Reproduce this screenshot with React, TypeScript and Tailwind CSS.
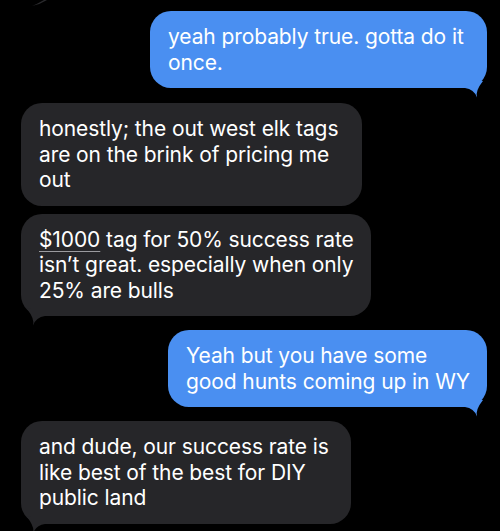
import React from 'react';

type Side = 'me' | 'them';

interface Msg {
  side: Side;
  lines: React.ReactNode[];
  width: string;
  tail: boolean;
  gap: string;
}

const messages: Msg[] = [
  { side: 'me', lines: ['yeah probably true. gotta do it', 'once.'], width: 'w-[337px]', tail: true, gap: 'mt-0' },
  {
    side: 'them',
    lines: ['honestly; the out west elk tags', 'are on the brink of pricing me', 'out'],
    width: 'w-[341px]',
    tail: false,
    gap: 'mt-[15px]',
  },
  {
    side: 'them',
    lines: [
      <>
        <span className="underline decoration-[#9b9b9f] decoration-1 underline-offset-[4px]">$1000</span> tag for 50% success rate
      </>,
      'isn\u2019t great. especially when only',
      '25% are bulls',
    ],
    width: 'w-[350px]',
    tail: true,
    gap: 'mt-[8px]',
  },
  { side: 'me', lines: ['Yeah but you have some', 'good hunts coming up in WY'], width: 'w-[319px]', tail: true, gap: 'mt-[14px]' },
  {
    side: 'them',
    lines: ['and dude, our success rate is', 'like best of the best for DIY', 'public land'],
    width: 'w-[330px]',
    tail: true,
    gap: 'mt-[14px]',
  },
];

function Tail({ side }: { side: Side }) {
  if (side === 'me') {
    return (
      <svg className="absolute right-[2px] bottom-[-10px] w-[24px] h-[18px]" viewBox="0 0 24 18">
        <path d="M0 0 L0 8 L4 8 Q13 9 16 17.5 Q14 11 22 1 L18 0 Z" fill="#4a8ff1" />
      </svg>
    );
  }
  return (
    <svg className="absolute left-[4px] bottom-[-10px] w-[24px] h-[18px]" viewBox="0 0 24 18">
      <path d="M24 0 L24 8 L20 8 Q11 9 8 17.5 Q10 11 2 1 L6 0 Z" fill="#262629" />
    </svg>
  );
}

function Bubble({ msg }: { msg: Msg }) {
  const isMe = msg.side === 'me';
  return (
    <div className={`flex ${isMe ? 'justify-end pr-[13px]' : 'justify-start pl-[21px]'} ${msg.gap}`}>
      <div
        className={`relative ${msg.width} rounded-[21px] pl-[18px] py-[13px] text-[21px] leading-[25.5px] text-white ${
          isMe ? 'bg-[#4a8ff1]' : 'bg-[#262629]'
        }`}
      >
        {msg.lines.map((line, i) => (
          <div key={i} className="relative z-10 whitespace-nowrap">
            {line}
          </div>
        ))}
        {msg.tail && <Tail side={msg.side} />}
      </div>
    </div>
  );
}

export default function App() {
  return (
    <div className="w-[500px] h-[531px] overflow-hidden bg-black font-['Inter','Noto_Sans',sans-serif] tracking-[-0.1px]">
      <div className="h-[11px] pl-[30px]">
        <svg width="18" height="7" viewBox="0 0 18 7">
          <path d="M2 6 Q7 4 14 0 L17 0 Q10 4.5 2 6 Z" fill="#2a2a2d" />
        </svg>
      </div>
      {messages.map((m, i) => (
        <Bubble key={i} msg={m} />
      ))}
    </div>
  );
}
